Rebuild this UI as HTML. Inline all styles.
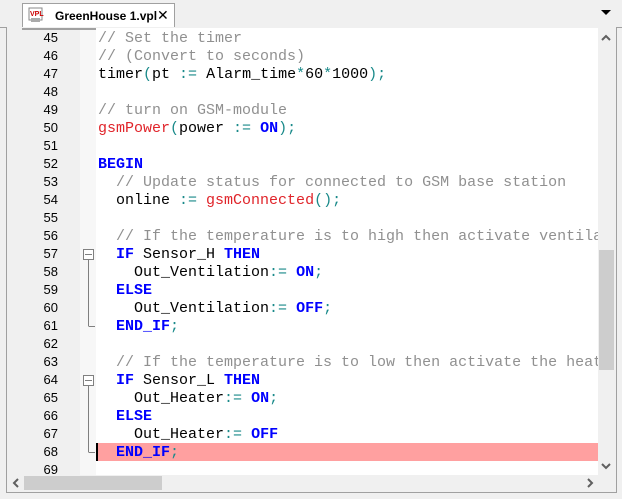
<!DOCTYPE html><html><head><style>
body{margin:0;width:622px;height:499px;background:#f0f0f0;position:relative;overflow:hidden;font-family:"Liberation Mono",monospace}
.tabbar{position:absolute;left:0;top:0;width:622px;height:27px;background:#f0f0f0;border-bottom:1px solid #a0a0a0}
.tab{position:absolute;left:22px;top:3px;width:153px;height:25px;background:#fff;border:1px solid #a0a0a0;border-bottom:none;font:bold 12px "Liberation Sans",sans-serif;box-sizing:border-box}
.frame{position:absolute;left:6px;top:27px;width:611px;height:466px;border:1px solid #a0a0a0;border-top:none;background:#f0f0f0;box-sizing:border-box}
.gut{position:absolute;left:22px;top:28px;width:58px;height:447px;background:#f0f0f0}
.fold{position:absolute;left:80px;top:28px;width:16px;height:447px;background:#f7f7f7}
.code{position:absolute;left:96px;top:28px;width:502px;height:447px;background:#fff;overflow:hidden}
.ln{position:absolute;left:22px;width:36px;text-align:right;font-size:13px;color:#000;line-height:18px;font-family:"Liberation Sans",sans-serif;margin-top:1px}
.l{position:absolute;left:2px;white-space:pre;font-size:15px;line-height:18px;color:#000;margin-top:2px}
.c{color:#909090}.k{color:#0000ff;font-weight:bold}.f{color:#e0242a}.p{color:#1a8a8a}
.hl{position:absolute;left:0;top:415px;width:502px;height:18px;background:#ffa0a0;border-left:2px solid #000;box-sizing:border-box}
.vs{position:absolute;left:598px;top:28px;width:16px;height:447px;background:#f0f0f0}
.hs{position:absolute;left:22px;top:475px;width:576px;height:16px;background:#f0f0f0}
</style></head><body>
<div class="tabbar"></div>
<div class="tab"><svg style="position:absolute;left:5px;top:3px" width="16" height="17"><rect x="1" y="1" width="13" height="12" fill="#fff" stroke="#888"/><text x="2" y="9" font-size="7" font-weight="bold" fill="#c00" font-family="Liberation Sans">VPL</text><rect x="3" y="11" width="9" height="4" fill="#aaa"/></svg><span style="position:absolute;left:32px;top:5px">GreenHouse 1.vpl</span><span style="position:absolute;left:134px;top:3px;font-weight:normal;font-size:14px">✕</span></div>
<div style="position:absolute;left:601px;top:10px;width:0;height:0;border-left:5px solid transparent;border-right:5px solid transparent;border-top:5px solid #000"></div>
<div class="frame"></div>
<div class="gut"></div><div class="fold"></div>
<div style="position:absolute;left:22px;top:28px;width:592px;height:2px;background:#a0a0a0"></div>
<div class="code">
<div class="hl"></div>
<div class="l" style="top:0"><span class="c">// Set the timer</span></div>
<div class="l" style="top:18px"><span class="c">// (Convert to seconds)</span></div>
<div class="l" style="top:36px">timer<span class="p">(</span>pt <span class="p">:=</span> Alarm_time<span class="p">*</span>60<span class="p">*</span>1000<span class="p">);</span></div>
<div class="l" style="top:72px"><span class="c">// turn on GSM-module</span></div>
<div class="l" style="top:90px"><span class="f">gsmPower</span><span class="p">(</span>power <span class="p">:=</span> <span class="k">ON</span><span class="p">);</span></div>
<div class="l" style="top:126px"><span class="k">BEGIN</span></div>
<div class="l" style="top:144px">  <span class="c">// Update status for connected to GSM base station</span></div>
<div class="l" style="top:162px">  online <span class="p">:=</span> <span class="f">gsmConnected</span><span class="p">();</span></div>
<div class="l" style="top:198px">  <span class="c">// If the temperature is to high then activate ventilation</span></div>
<div class="l" style="top:216px">  <span class="k">IF</span> Sensor_H <span class="k">THEN</span></div>
<div class="l" style="top:234px">    Out_Ventilation<span class="p">:=</span> <span class="k">ON</span><span class="p">;</span></div>
<div class="l" style="top:252px">  <span class="k">ELSE</span></div>
<div class="l" style="top:270px">    Out_Ventilation<span class="p">:=</span> <span class="k">OFF</span><span class="p">;</span></div>
<div class="l" style="top:288px">  <span class="k">END_IF</span><span class="p">;</span></div>
<div class="l" style="top:324px">  <span class="c">// If the temperature is to low then activate the heater</span></div>
<div class="l" style="top:342px">  <span class="k">IF</span> Sensor_L <span class="k">THEN</span></div>
<div class="l" style="top:360px">    Out_Heater<span class="p">:=</span> <span class="k">ON</span><span class="p">;</span></div>
<div class="l" style="top:378px">  <span class="k">ELSE</span></div>
<div class="l" style="top:396px">    Out_Heater<span class="p">:=</span> <span class="k">OFF</span></div>
<div class="l" style="top:414px">  <span class="k">END_IF</span><span class="p">;</span></div>
</div>
<div class="ln" style="top:28px">45</div><div class="ln" style="top:46px">46</div><div class="ln" style="top:64px">47</div><div class="ln" style="top:82px">48</div><div class="ln" style="top:100px">49</div><div class="ln" style="top:118px">50</div><div class="ln" style="top:136px">51</div><div class="ln" style="top:154px">52</div><div class="ln" style="top:172px">53</div><div class="ln" style="top:190px">54</div><div class="ln" style="top:208px">55</div><div class="ln" style="top:226px">56</div><div class="ln" style="top:244px">57</div><div class="ln" style="top:262px">58</div><div class="ln" style="top:280px">59</div><div class="ln" style="top:298px">60</div><div class="ln" style="top:316px">61</div><div class="ln" style="top:334px">62</div><div class="ln" style="top:352px">63</div><div class="ln" style="top:370px">64</div><div class="ln" style="top:388px">65</div><div class="ln" style="top:406px">66</div><div class="ln" style="top:424px">67</div><div class="ln" style="top:442px">68</div><div class="ln" style="top:460px">69</div>
<svg style="position:absolute;left:80px;top:28px" width="16" height="447">
<g stroke="#808080" fill="#fff"><rect x="3.5" y="221.5" width="10" height="10"/><line x1="5" y1="226.5" x2="12" y2="226.5"/><line x1="8.5" y1="232" x2="8.5" y2="298"/><line x1="8.5" y1="298.5" x2="15" y2="298.5"/>
<rect x="3.5" y="347.5" width="10" height="10"/><line x1="5" y1="352.5" x2="12" y2="352.5"/><line x1="8.5" y1="358" x2="8.5" y2="424"/><line x1="8.5" y1="424.5" x2="15" y2="424.5"/></g></svg>
<div class="vs"><div style="position:absolute;left:1px;top:222px;width:15px;height:120px;background:#cdcdcd"></div>
<svg style="position:absolute;left:3px;top:6px" width="10" height="8"><path d="M1 6L5 2L9 6" stroke="#606060" stroke-width="2" fill="none"/></svg>
<svg style="position:absolute;left:3px;top:434px" width="10" height="8"><path d="M1 2L5 6L9 2" stroke="#606060" stroke-width="2" fill="none"/></svg></div>
<div class="hs"><div style="position:absolute;left:2px;top:1px;width:138px;height:14px;background:#cdcdcd"></div>
<svg style="position:absolute;left:-10px;top:3px" width="8" height="10"><path d="M6 1L2 5L6 9" stroke="#606060" stroke-width="2" fill="none"/></svg>
<svg style="position:absolute;left:564px;top:3px" width="8" height="10"><path d="M2 1L6 5L2 9" stroke="#606060" stroke-width="2" fill="none"/></svg></div>
</body></html>
